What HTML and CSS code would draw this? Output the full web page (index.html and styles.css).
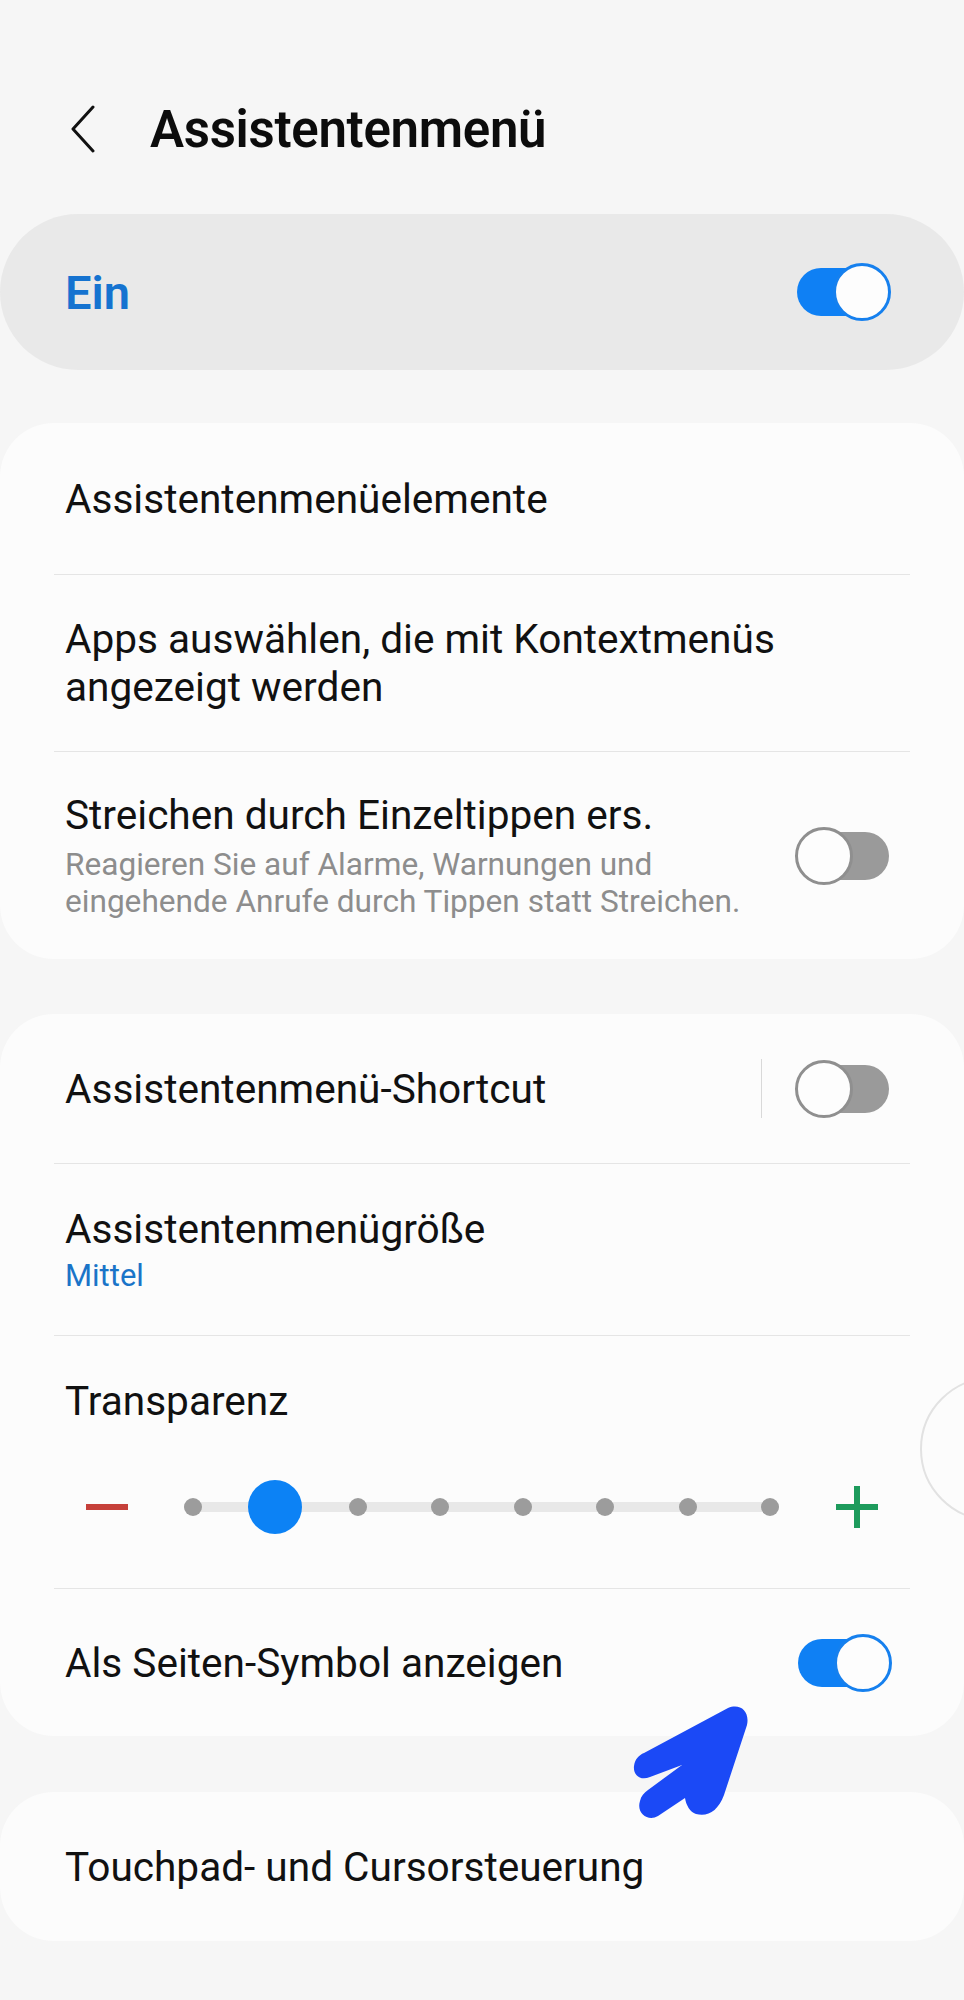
FILE: index.html
```html
<!DOCTYPE html>
<html lang="de">
<head>
<meta charset="utf-8">
<title>Assistentenmenü</title>
<link rel="stylesheet" href="styles.css">
</head>
<body>
<div class="page">
  <header class="topbar">
    <svg class="back" width="26" height="48" viewBox="0 0 26 48"><path d="M23 2 L3 24 L23 46" fill="none" stroke="#111" stroke-width="3" stroke-linecap="round" stroke-linejoin="round"/></svg>
    <h1 class="title">Assistentenmenü</h1>
  </header>

  <section class="master">
    <span class="master-label">Ein</span>
    <span class="toggle on"><span class="knob"></span></span>
  </section>

  <section class="card">
    <div class="row r1"><div class="text"><div class="main">Assistentenmenüelemente</div></div></div>
    <div class="row r2"><div class="text"><div class="main">Apps auswählen, die mit Kontextmenüs<br>angezeigt werden</div></div></div>
    <div class="row r3">
      <div class="text">
        <div class="main">Streichen durch Einzeltippen ers.</div>
        <div class="sub">Reagieren Sie auf Alarme, Warnungen und<br>eingehende Anrufe durch Tippen statt Streichen.</div>
      </div>
      <span class="toggle off"><span class="knob"></span></span>
    </div>
  </section>

  <section class="card c3">
    <div class="row ra">
      <div class="text"><div class="main">Assistentenmenü-Shortcut</div></div>
      <span class="vsep"></span>
      <span class="toggle off"><span class="knob"></span></span>
    </div>
    <div class="row rb">
      <div class="text">
        <div class="main">Assistentenmenügröße</div>
        <div class="value">Mittel</div>
      </div>
    </div>
    <div class="row rc">
      <div class="main">Transparenz</div>
      <div class="slider">
        <span class="minus"></span>
        <div class="track">
          <span class="stop"></span>
          <span class="stop active"></span>
          <span class="stop"></span>
          <span class="stop"></span>
          <span class="stop"></span>
          <span class="stop"></span>
          <span class="stop"></span>
          <span class="stop"></span>
        </div>
        <span class="plus"></span>
      </div>
    </div>
    <div class="row rd">
      <div class="text"><div class="main">Als Seiten-Symbol anzeigen</div></div>
      <span class="toggle on"><span class="knob"></span></span>
    </div>
  </section>

  <section class="card c4">
    <div class="row re"><div class="text"><div class="main">Touchpad- und Cursorsteuerung</div></div></div>
  </section>

  <div class="float-btn"></div>
  <svg class="arrow" width="140" height="135" viewBox="0 0 140 135">
    <path d="M108,13 C120,8 130,16 127,30 L104,100 C98,116 88,122 76,119 C70,117 66,110 65,103 L38,121 C28,127 16,118 20,106 C21,101 24,98 28,95 L62,70 L30,82 C20,86 13,80 14,71 C15,64 19,60 24,58 Z" fill="#1b49f6"/>
  </svg>
</div>
</body>
</html>
```

FILE: styles.css
```css
html, body {
  margin: 0;
  padding: 0;
  background: #f6f6f6;
}
body {
  font-family: Roboto, "Noto Sans", "DejaVu Sans", sans-serif;
  color: #111;
}
.page {
  position: relative;
  width: 964px;
  min-height: 2000px;
  overflow: hidden;
}
.topbar {
  display: flex;
  align-items: center;
  height: 74px;
  margin-top: 92px;
  padding-left: 70px;
}
.back {
  display: block;
  margin-right: 54px;
}
.title {
  margin: 0;
  font-size: 51px;
  font-weight: 600;
  letter-spacing: -0.3px;
  color: #0c0c0c;
}
.master {
  margin-top: 48px;
  height: 156px;
  border-radius: 78px;
  background: #e9e9e9;
  display: flex;
  align-items: center;
  justify-content: space-between;
  padding: 0 73px 0 65px;
}
.master-label {
  font-size: 47px;
  font-weight: 600;
  color: #1573d0;
}
.toggle {
  position: relative;
  width: 97px;
  height: 58px;
  flex: none;
}
.toggle::before {
  content: "";
  position: absolute;
  left: 3px;
  right: 3px;
  top: 5px;
  bottom: 5px;
  border-radius: 24px;
  background: #9a9a9a;
}
.toggle.on::before {
  background: #0f80f4;
}
.toggle .knob {
  position: absolute;
  top: 0;
  width: 58px;
  height: 58px;
  box-sizing: border-box;
  border-radius: 50%;
  background: #fdfdfd;
}
.toggle.on .knob {
  right: 0;
  border: 3px solid #1680ee;
}
.toggle.off .knob {
  left: 0;
  border: 3px solid #8f8f8f;
}
.card {
  margin-top: 53px;
  background: #fcfcfc;
  border-radius: 54px;
}
.row {
  margin: 0 54px;
  padding: 0 18px 0 11px;
  display: flex;
  align-items: center;
  border-bottom: 1px solid #e5e5e5;
}
.row:last-child {
  border-bottom: none;
}
.text {
  flex: 1;
}
.main {
  font-size: 40.6px;
  line-height: 48px;
  color: #111;
}
.sub {
  font-size: 31.6px;
  line-height: 37px;
  color: #8d8d8d;
  margin-top: 7px;
}
.value {
  font-size: 31px;
  line-height: 37px;
  color: #1a74c8;
  margin-top: 4px;
}
.r1 { height: 151px; }
.r2 { height: 176px; }
.r3 { height: 207px; }
.c3 { margin-top: 55px; }
.ra { height: 149px; }
.rb { height: 171px; }
.rc {
  display: block;
  height: 253px;
  box-sizing: border-box;
  padding-top: 41px;
}
.rd { height: 147px; }
.c4 { margin-top: 56px; }
.re { height: 149px; }
.vsep {
  width: 1px;
  height: 59px;
  background: #d9d9d9;
  margin-right: 33px;
}
.slider {
  display: flex;
  align-items: center;
  height: 54px;
  margin-top: 55px;
  padding-left: 21px;
}
.minus {
  width: 42px;
  height: 6px;
  background: #c6403a;
  margin-right: 56px;
}
.track {
  width: 595px;
  height: 10px;
  border-radius: 5px;
  background: #e8e8e8;
  display: flex;
  align-items: center;
  justify-content: space-between;
}
.stop {
  position: relative;
  width: 18px;
  height: 18px;
  border-radius: 50%;
  background: #9c9c9c;
}
.stop.active {
  background: transparent;
}
.stop.active::after {
  content: "";
  position: absolute;
  left: -18px;
  top: -18px;
  width: 54px;
  height: 54px;
  border-radius: 50%;
  background: #0c82f5;
}
.plus {
  position: relative;
  width: 42px;
  height: 42px;
  margin-left: 57px;
}
.plus::before, .plus::after {
  content: "";
  position: absolute;
  background: #1d9b5c;
}
.plus::before {
  left: 0;
  right: 0;
  top: 18px;
  height: 6px;
}
.plus::after {
  top: 0;
  bottom: 0;
  left: 18px;
  width: 6px;
}
.float-btn {
  position: absolute;
  left: 920px;
  top: 1377px;
  width: 144px;
  height: 144px;
  box-sizing: border-box;
  border-radius: 50%;
  border: 2px solid #e2e2e2;
  background: rgba(252,252,252,0.6);
}
.arrow {
  position: absolute;
  left: 620px;
  top: 1695px;
}
```
